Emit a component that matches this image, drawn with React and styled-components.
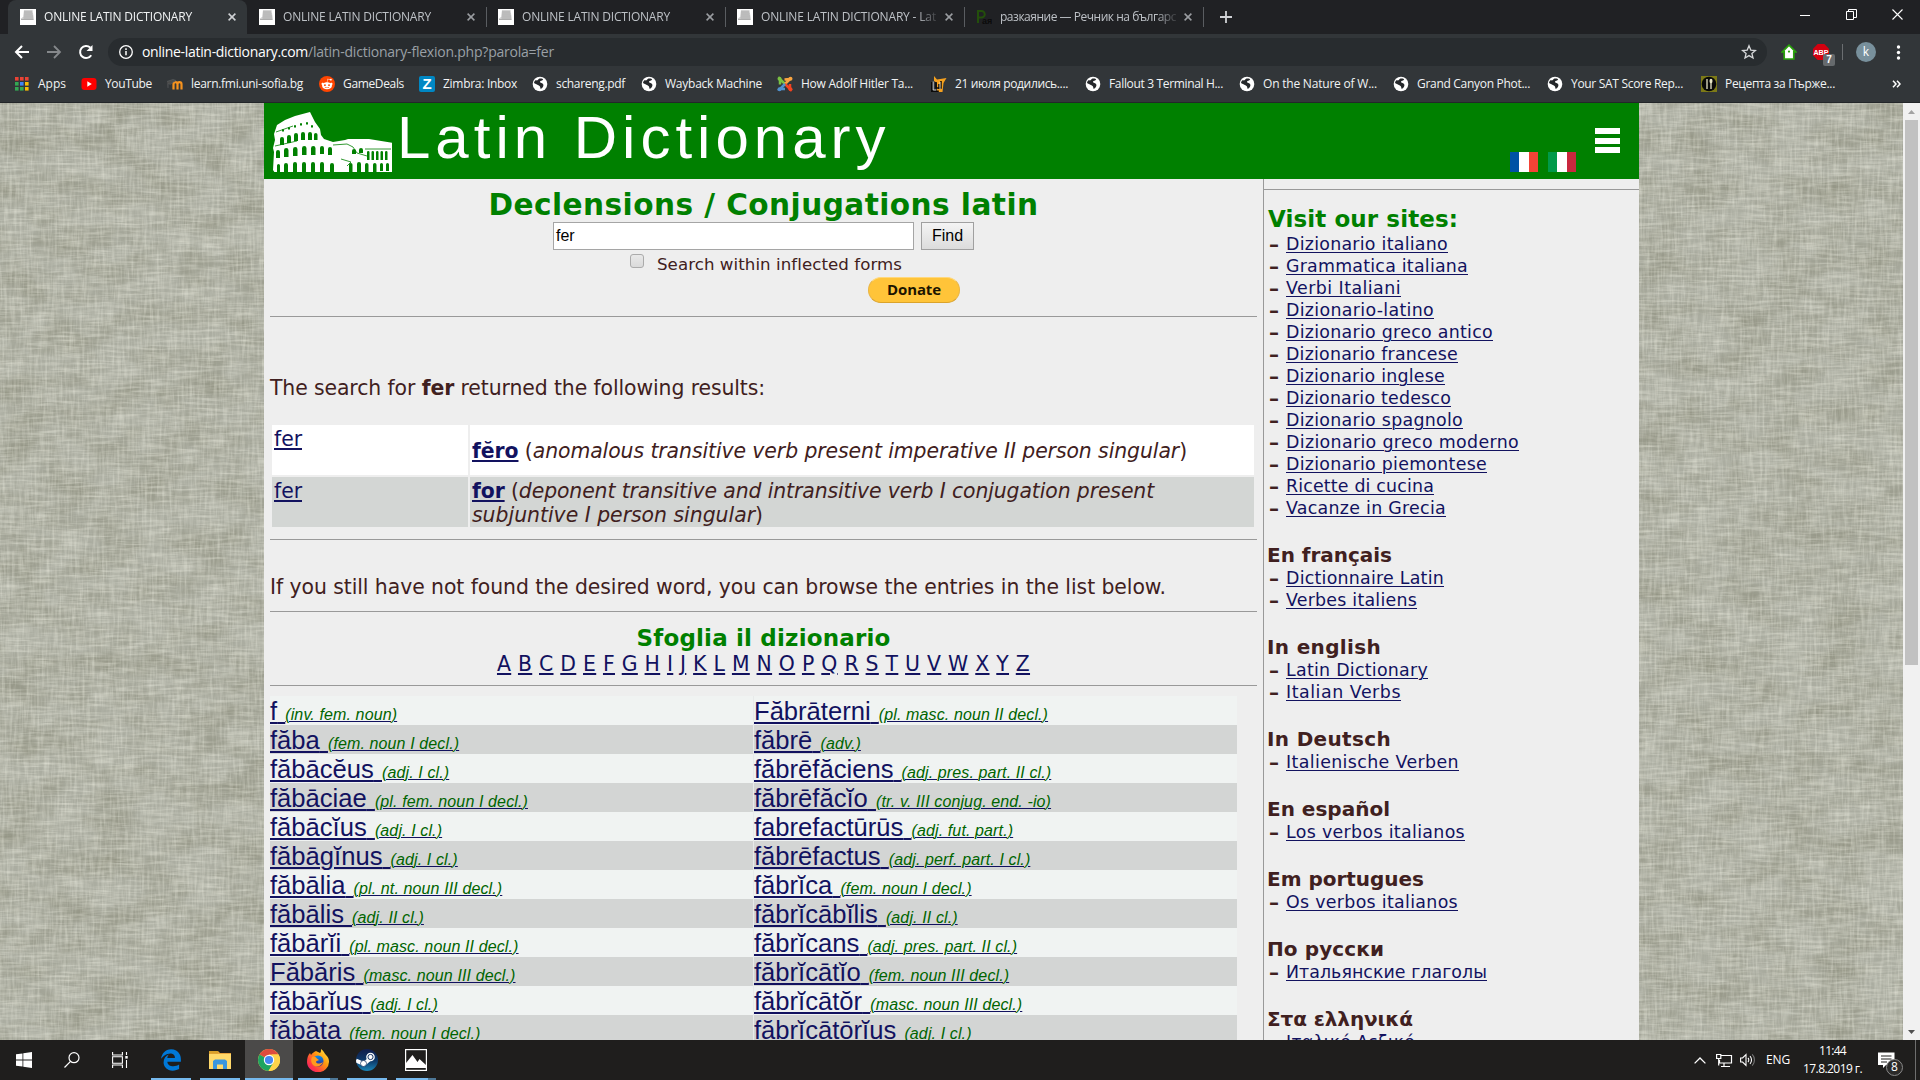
import React, { useLayoutEffect, useRef, useState } from "react";
import styled, { createGlobalStyle } from "styled-components";
import { FaRedditAlien, FaEdgeLegacy } from "react-icons/fa";

const UI = '"Open Sans", "Noto Sans", sans-serif';
const VERDANA = 'Verdana, "DejaVu Sans", sans-serif';
const ARIAL = 'Arial, "Liberation Sans", sans-serif';

const GlobalStyle = createGlobalStyle`
  *, *::before, *::after { box-sizing: border-box; }
  html, body { margin: 0; padding: 0; overflow: hidden; background: #202124; }
  svg { display: block; flex: none; }
`;

/* Text that spreads its letters so that it fills a given width. */
const FitSpan = styled.span`
  display: inline-block;
  white-space: pre;
`;
function Fit({ w, children }) {
  const ref = useRef(null);
  const [spacing, setSpacing] = useState(0);
  useLayoutEffect(() => {
    const el = ref.current;
    const chars = el.textContent.length;
    const natural = el.getBoundingClientRect().width - spacing * chars;
    setSpacing((w - natural) / chars);
  }, [w]);
  return (
    <FitSpan ref={ref} style={{ letterSpacing: `${spacing}px` }}>
      {children}
    </FitSpan>
  );
}

const Screen = styled.div`
  width: 1920px;
  height: 1080px;
  display: flex;
  flex-direction: column;
  overflow: hidden;
`;

/* ---------- tab strip ---------- */
const TabStrip = styled.div`
  height: 34px;
  flex: none;
  background: #202124;
  display: flex;
  padding-left: 8px;
  font: 12px/18px ${UI};
`;
const Tab = styled.div`
  width: 239px;
  height: 34px;
  display: flex;
  align-items: center;
  padding: 0 6px 0 12px;
  color: ${(p) => (p.$active ? "#f1f3f4" : "#bdc1c6")};
  background: ${(p) => (p.$active ? "#323639" : "transparent")};
  border-radius: 8px 8px 0 0;
`;
const TabTitle = styled.div`
  width: 176px;
  margin-left: 8px;
  padding-bottom: 1px;
  overflow: hidden;
  mask-image: linear-gradient(90deg, #000 156px, rgba(0, 0, 0, 0.15) 176px);
`;
const TabClose = styled.div`
  width: 18px;
  display: flex;
  justify-content: center;
  margin-left: 3px;
`;
const TabDivider = styled.div`
  width: 1px;
  height: 20px;
  margin: 7px -1px 0 0;
  background: #5a5d61;
`;
const NewTab = styled.div`
  width: 46px;
  display: flex;
  align-items: center;
  justify-content: center;
`;
const WindowButtons = styled.div`
  margin-left: auto;
  display: flex;
  height: 29px;
  align-items: center;
`;
const WindowButton = styled.div`
  width: 46px;
  display: flex;
  justify-content: center;
`;

const Parchment = () => (
  <svg width="16" height="16" viewBox="0 0 16 16">
    <rect width="16" height="16" fill="#fff" />
    <path d="M4 1h8.500l1.500 9.500H3l-2.500-.8L3 8z" fill="#d2d2d2" />
    <path d="M4 3h8M4 5h8.500M4 7h9M3.500 9H13M1 10.500h12.500" stroke="#9a9a9a" strokeWidth=".8" />
  </svg>
);
const Pay = () => (
  <svg width="16" height="16" viewBox="0 0 16 16">
    <path d="M2 14V2h3.500a3 3 0 0 1 0 6.500H2" fill="none" stroke="#234f0b" strokeWidth="2" />
    <text x="6" y="15" fontFamily="Liberation Sans" fontSize="9" fontWeight="700" fill="#0b0b0b">ая</text>
  </svg>
);
const Cross = ({ color }) => (
  <svg width="8" height="8" viewBox="0 0 8 8">
    <path d="M.6.6l6.8 6.8M7.4.6.6 7.4" stroke={color} strokeWidth="1.5" />
  </svg>
);

const tabs = [
  { title: "ONLINE LATIN DICTIONARY", w: 148, active: true },
  { title: "ONLINE LATIN DICTIONARY", w: 148 },
  { title: "ONLINE LATIN DICTIONARY", w: 148, divider: true },
  { title: "ONLINE LATIN DICTIONARY - Lat", w: 175, divider: true },
  { title: "разкаяние — Речник на българс", w: 176, divider: true, pay: true },
];

function Tabs() {
  return (
    <TabStrip>
      {tabs.map((t, i) => (
        <React.Fragment key={i}>
          {t.divider && <TabDivider />}
          <Tab $active={t.active}>
            {t.pay ? <Pay /> : <Parchment />}
            <TabTitle><Fit w={t.w}>{t.title}</Fit></TabTitle>
            <TabClose><Cross color={t.active ? "#d0d2d5" : "#9a9da1"} /></TabClose>
          </Tab>
        </React.Fragment>
      ))}
      <TabDivider />
      <NewTab>
        <svg width="12" height="12" viewBox="0 0 12 12"><path d="M6 0v12M0 6h12" stroke="#d0d2d5" strokeWidth="1.8" /></svg>
      </NewTab>
      <WindowButtons>
        <WindowButton><svg width="10" height="10"><path d="M0 5.5h10" stroke="#fff" /></svg></WindowButton>
        <WindowButton>
          <svg width="11" height="11" fill="none" stroke="#fff"><path d="M.5 2.5h7v8h-7zM2.5 2.5v-2h8v8h-2.5" /></svg>
        </WindowButton>
        <WindowButton>
          <svg width="11" height="11"><path d="M.5.5l10 10M10.5.5l-10 10" stroke="#fff" strokeWidth="1.1" /></svg>
        </WindowButton>
      </WindowButtons>
    </TabStrip>
  );
}

/* ---------- address bar ---------- */
const Toolbar = styled.div`
  height: 34px;
  flex: none;
  background: #323639;
  display: flex;
  align-items: center;
  padding: 2px 0 0 14px;
`;
const NavButton = styled.div`
  width: 16px;
  margin-right: 16px;
  display: flex;
  justify-content: center;
`;
const Omnibox = styled.div`
  width: 1659px;
  height: 28px;
  margin-left: -2px;
  border-radius: 14px;
  background: #282c2f;
  display: flex;
  align-items: center;
  padding: 0 10px;
  font: 14px/20px ${UI};
  color: #fff;
`;
const Url = styled.div`
  margin: 0 auto 0 8px;
`;
const Path = styled.span`
  color: #9aa0a6;
`;
const Extensions = styled.div`
  display: flex;
  align-items: center;
  margin-left: 14px;
`;
const AbpWrap = styled.div`
  position: relative;
  margin-left: 16px;
`;
const AbpCount = styled.div`
  position: absolute;
  left: 10px;
  top: 10px;
  width: 12px;
  height: 12px;
  border-radius: 2px;
  background: #666a6d;
  color: #fff;
  font: 700 10px/12px ${ARIAL};
  text-align: center;
`;
const ToolDivider = styled.div`
  width: 1px;
  height: 16px;
  margin: 0 13px 0 13px;
  background: #6b6e71;
`;
const Avatar = styled.div`
  width: 20px;
  height: 20px;
  border-radius: 50%;
  background: #78909c;
  color: #fff;
  font: 12px/19px ${UI};
  text-align: center;
`;

function AddressBar() {
  return (
    <Toolbar>
      <NavButton>
        <svg width="16" height="14" viewBox="0 0 16 14" fill="none" stroke="#fff" strokeWidth="2"><path d="M15 7H2M8 1 2 7l6 6" /></svg>
      </NavButton>
      <NavButton>
        <svg width="16" height="14" viewBox="0 0 16 14" fill="none" stroke="#85888b" strokeWidth="1.8"><path d="M1 7h13M8 1l6 6-6 6" /></svg>
      </NavButton>
      <NavButton>
        <svg width="16" height="16" viewBox="0 0 16 16"><path d="M13.2 11.2A6 6 0 1 1 12.2 3.6" fill="none" stroke="#fff" strokeWidth="2" /><path d="M14.5 1v6h-6z" fill="#fff" /></svg>
      </NavButton>
      <Omnibox>
        <svg width="16" height="16" viewBox="0 0 16 16"><circle cx="8" cy="8" r="6.3" fill="none" stroke="#fff" strokeWidth="1.3" /><path d="M8 7v4.3M8 4.3v1.6" stroke="#fff" strokeWidth="1.5" /></svg>
        <Url><Fit w={166}>online-latin-dictionary.com</Fit><Path><Fit w={246}>/latin-dictionary-flexion.php?parola=fer</Fit></Path></Url>
        <svg width="16" height="16" viewBox="0 0 16 16"><path d="M8 1.8l1.8 4.3 4.6.4-3.5 3 1.1 4.5-4-2.4-4 2.4 1.1-4.5-3.5-3 4.6-.4z" fill="none" stroke="#d5d7d9" strokeWidth="1.3" /></svg>
      </Omnibox>
      <Extensions>
        <svg width="16" height="16" viewBox="0 0 16 16"><path d="M8 1.200 14.600 7.800H12.800V15H3.200V7.800H1.400z" fill="#fff" stroke="#29a20b" strokeWidth="1.700" /><circle cx="8" cy="7.600" r="1.100" fill="#29a20b" /></svg>
        <AbpWrap>
          <svg width="16" height="16" viewBox="0 0 16 16"><path d="M4.7 0h6.6L16 4.7v6.6L11.3 16H4.7L0 11.3V4.7z" fill="#d3000f" /><text x="8" y="10.600" textAnchor="middle" fontFamily="Liberation Sans" fontSize="7.200" fontWeight="700" fill="#fff">ABP</text></svg>
          <AbpCount>7</AbpCount>
        </AbpWrap>
        <ToolDivider />
        <Avatar>k</Avatar>
        <svg width="44" height="16" viewBox="0 0 44 16" fill="#fff"><circle cx="22.500" cy="3" r="1.700" /><circle cx="22.500" cy="8.500" r="1.700" /><circle cx="22.500" cy="14" r="1.700" /></svg>
      </Extensions>
    </Toolbar>
  );
}

/* ---------- bookmarks ---------- */
const BookmarkBar = styled.div`
  height: 35px;
  flex: none;
  background: #323639;
  border-bottom: 1px solid #232629;
  display: flex;
  align-items: center;
  padding: 0 0 2px 14px;
  font: 12px/18px ${UI};
  color: #f1f3f4;
`;
const Bookmark = styled.div`
  width: ${(p) => p.$pitch}px;
  flex: none;
  display: flex;
  align-items: center;
  gap: 8px;
  white-space: nowrap;
`;
const Disc = styled.span`
  width: 16px;
  height: 16px;
  flex: none;
  border-radius: ${(p) => p.$radius};
  background: ${(p) => p.$bg};
  color: #fff;
  display: flex;
  align-items: center;
  justify-content: center;
  font: 700 15px/16px ${ARIAL};
`;

const Globe = () => (
  <svg width="16" height="16" viewBox="0 0 16 16">
    <circle cx="8" cy="8" r="7.300" fill="#fff" />
    <path d="M7.500 2.600c1.500-.4 3.300 0 3.600.8-.3 1-1.600.9-2.600 1.600-.8.600-.6 1.400.4 1.800 1.600.5 2.700 1.200 2.500 2.700-.2 1.300-1.200 2.700-2.600 3.400-.7-.5-.3-1.700-1-2.600C6.800 9.200 5 8.800 4 8c-.9-.6-1.900-.8-2-1.600C2.300 5.500 3 4.600 3.900 4c.8.700 1.500.3 2.200-.2.500-.4.700-1 1.400-1.200z" fill="#25282b" />
  </svg>
);
const appColors = ["#ea4335", "#ea4335", "#ea4335", "#34a853", "#4285f4", "#fbbc04", "#34a853", "#34a853", "#fbbc04"];
const AppsIcon = () => (
  <svg width="16" height="16" viewBox="0 0 16 16">
    {appColors.map((c, i) => <rect key={i} x={1 + (i % 3) * 5} y={1 + Math.floor(i / 3) * 5} width="3.600" height="3.600" fill={c} />)}
  </svg>
);
const YouTube = () => (
  <svg width="16" height="16" viewBox="0 0 16 16"><rect x=".5" y="2" width="15" height="12" rx="3" fill="#f00" /><path d="M6.300 5.300 10.800 8l-4.500 2.700z" fill="#fff" /></svg>
);
const Moodle = () => (
  <svg width="16" height="16" viewBox="0 0 16 16"><path d="M6.500 13.500V8.200a2 2 0 0 1 4 0v5.300M10.500 8.200a2 2 0 0 1 4 0v5.300" fill="none" stroke="#f7931e" strokeWidth="2.200" /><path d="M0 5.500 6 3.500l3 1-4 2.200-1.500 1.600L1 7.500V12" fill="#4a4a4a" stroke="#56595b" strokeWidth=".8" /></svg>
);
const Joomla = () => (
  <svg width="16" height="16" viewBox="0 0 16 16" fill="none" strokeWidth="2.500">
    <path d="M3 8.500V3l5 5" stroke="#7ac143" />
    <path d="M7.500 3.500 13 3 8 8" stroke="#f9a541" strokeLinejoin="round" />
    <path d="M13 8v5L8 8" stroke="#f44321" />
    <path d="M8 13H3l5-5" stroke="#5091cd" />
    <g stroke="none"><circle cx="2.500" cy="2.700" r="2" fill="#7ac143" /><circle cx="13.500" cy="2.700" r="2" fill="#f9a541" /><circle cx="13.500" cy="13.300" r="2" fill="#f44321" /><circle cx="2.500" cy="13.300" r="2" fill="#5091cd" /></g>
  </svg>
);
const Lira = () => (
  <svg width="16" height="16" viewBox="0 0 16 16"><path d="M3 0l3 3.500L15.500 2l-3 5-1 9H6V7L3 5z" fill="#f5a11f" /><path d="M.8 6v9.200h7M5 6v6h5V5M8 8v5" fill="none" stroke="#0a0a0a" strokeWidth="1.500" /><path d="M2.200 5.500v8.500h3M9 6v7" fill="none" stroke="#eee" strokeWidth=".8" /></svg>
);
const Recipe = () => (
  <svg width="16" height="16" viewBox="0 0 16 16"><rect width="16" height="16" fill="#7d7a17" /><circle cx="8" cy="8" r="7.300" fill="#080808" /><path d="M6 3v3.500M6 6v7M10 13V8M10 3v5" stroke="#e8e6c8" strokeWidth="1.300" /><ellipse cx="10" cy="5" rx="1.500" ry="2.300" fill="#e8e6c8" /></svg>
);

const bookmarks = [
  [<AppsIcon />, "Apps", 28, 67],
  [<YouTube />, "YouTube", 47, 86],
  [<Moodle />, "learn.fmi.uni-sofia.bg", 112, 152],
  [<Disc $radius="50%" $bg="#ff4500"><FaRedditAlien size={12} /></Disc>, "GameDeals", 61, 100],
  [<Disc $radius="2px" $bg="#0087c3">Z</Disc>, "Zimbra: Inbox", 74, 113],
  [<Globe />, "schareng.pdf", 69, 109],
  [<Globe />, "Wayback Machine", 97, 136],
  [<Joomla />, "How Adolf Hitler Ta...", 112, 154],
  [<Lira />, "21 июля родились....", 113, 154],
  [<Globe />, "Fallout 3 Terminal H...", 114, 154],
  [<Globe />, "On the Nature of W...", 114, 154],
  [<Globe />, "Grand Canyon Phot...", 113, 154],
  [<Globe />, "Your SAT Score Rep...", 112, 154],
  [<Recipe />, "Рецепта за Пърже...", 110, 191],
];

function Bookmarks() {
  return (
    <BookmarkBar>
      {bookmarks.map(([icon, label, w, pitch], i) => (
        <Bookmark key={i} $pitch={pitch}>{icon}<Fit w={w}>{label}</Fit></Bookmark>
      ))}
      <svg width="9" height="8" viewBox="0 0 9 8" fill="none" stroke="#fff" strokeWidth="1.500"><path d="M1 .8 4 4 1 7.200M5 .8 8 4 5 7.200" /></svg>
    </BookmarkBar>
  );
}

/* ---------- web page ---------- */
const Viewport = styled.div`
  height: 937px;
  flex: none;
  display: flex;
  position: relative;
  overflow: hidden;
  background: #afb0a4;
`;
const Linen = styled.svg`
  position: absolute;
  left: 0;
  top: 0;
`;
const Backdrop = styled.div`
  width: 1903px;
  display: flex;
  padding-left: 264px;
  position: relative;
`;
const Site = styled.div`
  width: 1375px;
  height: 937px;
  overflow: hidden;
  background: #eee;
  color: #402020;
  font: 20.4px/24px ${VERDANA};
`;
const Banner = styled.div`
  height: 76px;
  background: #008000;
  display: flex;
  padding-left: 9px;
`;
const BannerTitle = styled.div`
  margin: 0 auto 0 5px;
  font: 60px/70px ${ARIAL};
  letter-spacing: 5px;
  white-space: nowrap;
  color: #fff;
`;
const Flags = styled.div`
  display: flex;
  gap: 10px;
  padding-top: 49px;
`;
const Flag = styled.div`
  width: 28px;
  height: 20px;
  background: linear-gradient(90deg, ${(p) => p.$left} 9px, #fff 9px, #fff 19px, ${(p) => p.$right} 19px);
`;
const Burger = styled.div`
  margin: 25px 19px 0;
  width: 25px;
  height: 25px;
  display: flex;
  flex-direction: column;
  justify-content: space-between;
`;
const BurgerLine = styled.div`
  height: 6px;
  background: #fff;
`;
const Columns = styled.div`
  display: flex;
  height: 861px;
`;
const Main = styled.div`
  width: 999px;
  flex: none;
  padding: 9px 6px 0;
`;
const Heading = styled.div`
  font-weight: 700;
  color: #008000;
  text-align: center;
  font-size: ${(p) => p.$size}px;
  line-height: ${(p) => p.$line}px;
  height: ${(p) => p.$line}px;
  margin-top: ${(p) => p.$top || 0}px;
`;
const SearchRow = styled.div`
  display: flex;
  gap: 7px;
  padding-left: 283px;
  font: 16px/26px ${ARIAL};
  color: #000;
`;
const Field = styled.div`
  width: 361px;
  height: 28px;
  padding-left: 2px;
  line-height: 25px;
  background: #fff;
  border: 1px solid #a5a5a5;
`;
const FindButton = styled.div`
  width: 53px;
  height: 28px;
  line-height: 25px;
  text-align: center;
  border: 1px solid #a0a0a0;
  background: linear-gradient(#f4f4f4, #dcdcdc);
`;
const CheckRow = styled.div`
  display: flex;
  padding: 1px 0 0 360px;
  height: 27px;
  font-size: 16.64px;
  line-height: 27px;
`;
const Checkbox = styled.div`
  width: 14px;
  height: 14px;
  margin: 3px 13px 0 0;
  border: 1px solid #ababab;
  border-radius: 3px;
  background: linear-gradient(#e9e9e9, #dadada);
`;
const Donate = styled.div`
  width: 92px;
  height: 26px;
  margin-left: 598px;
  border-radius: 13px;
  background: #ffc439;
  border: 1px solid #e9b544;
  border-top-color: #ffd87c;
  border-bottom-color: #dba32a;
  color: #1b1400;
  text-align: center;
  font: 700 15px/23px ${UI};
`;
const Rule = styled.div`
  height: 1px;
  background: #999;
  margin-top: ${(p) => p.$top}px;
`;
const Line = styled.div`
  height: 24px;
  margin-top: ${(p) => p.$top}px;
`;
const Link = styled.span`
  color: #12125f;
  font-weight: ${(p) => (p.$bold ? 700 : 400)};
  text-decoration: underline;
  text-decoration-thickness: ${(p) => p.$thick || 2}px;
  text-underline-offset: 1.5px;
`;
const Results = styled.div`
  display: grid;
  grid-template-columns: 196px 784px;
  grid-auto-rows: 50px;
  gap: 2px;
  margin: 25px 0 0 2px;
`;
const Cell = styled.div`
  background: ${(p) => (p.$grey ? "#d3d6d4" : "#fff")};
  padding: 2px 0 0 2px;
  display: flex;
  flex-direction: column;
  align-items: flex-start;
  justify-content: center;
`;
const TopCell = styled(Cell)`
  justify-content: flex-start;
`;
const Alphabet = styled.div`
  height: 26px;
  line-height: 26px;
  text-align: center;
`;
const Entries = styled.div`
  display: grid;
  grid-template-columns: 483px 484px;
  grid-auto-rows: 29px;
  margin-top: 10px;
  font: 25.6px/29px ${ARIAL};
`;
const Entry = styled.div`
  background: ${(p) => (p.$grey ? "#d3d5d4" : "#f0f3f2")};
  border-left: ${(p) => (p.$second ? "1px solid #e8eaea" : "0")};
  white-space: pre;
  line-height: 30px;
  height: 29px;
`;
const Word = styled.span`
  color: #12125f;
  word-spacing: 1px;
  text-decoration: underline 2px;
  text-underline-offset: 2px;
`;
const Gram = styled.span`
  color: #006400;
  font-size: 16px;
  font-style: italic;
  letter-spacing: 0.12px;
  text-decoration: underline 1px #12125f;
  text-underline-offset: 1px;
`;

const Side = styled.div`
  width: 376px;
  border-left: 1px solid #999;
  padding-top: 10px;
`;
const SideTitle = styled(Heading)`
  text-align: left;
  padding-left: 4px;
`;
const SideHead = styled.div`
  font-size: 20px;
  font-weight: 700;
  height: 24px;
  margin-top: 24px;
  padding-left: 3px;
`;
const SideItem = styled.div`
  display: flex;
  height: 22px;
  font-size: 17.4px;
  line-height: 22px;
  padding-left: 5px;
`;
const Dash = styled.b`
  width: 17px;
  font-size: 20px;
`;

const Scrollbar = styled.div`
  width: 17px;
  flex: none;
  background: #f1f1f1;
  position: relative;
  display: flex;
  flex-direction: column;
  align-items: center;
  padding: 7px 0 6px;
`;
const Thumb = styled.div`
  width: 13px;
  height: 545px;
  margin: 6px 0 auto;
  background: #c1c1c1;
`;

const LinenTexture = () => (
  <Linen width="1903" height="937" colorInterpolationFilters="sRGB">
    <defs>
      <filter id="warp" x="0" y="0" width="100%" height="100%">
        <feTurbulence type="fractalNoise" baseFrequency="0.400 0.040" numOctaves="3" seed="4" />
        <feColorMatrix values="0 0 0 0 1  0 0 0 0 1  0 0 0 0 0.950  0.550 0 0 0 -0.200" />
      </filter>
      <filter id="weft" x="0" y="0" width="100%" height="100%">
        <feTurbulence type="fractalNoise" baseFrequency="0.035 0.400" numOctaves="3" seed="9" />
        <feColorMatrix values="0 0 0 0 1  0 0 0 0 1  0 0 0 0 0.950  0.700 0 0 0 -0.270" />
      </filter>
      <filter id="shade" x="0" y="0" width="100%" height="100%">
        <feTurbulence type="fractalNoise" baseFrequency="0.022 0.040" numOctaves="4" seed="2" />
        <feColorMatrix values="0 0 0 0 0.420  0 0 0 0 0.420  0 0 0 0 0.330  0.650 0 0 0 -0.220" />
      </filter>
    </defs>
    <rect width="1903" height="937" fill="#abada1" />
    <rect width="1903" height="937" filter="url(#shade)" />
    <rect width="1903" height="937" filter="url(#warp)" />
    <rect width="1903" height="937" filter="url(#weft)" />
  </Linen>
);

const arch = (x, y, w, h) => `M${x} ${y + h}v${-(h - w / 2)}a${w / 2} ${w / 2} 0 0 1 ${w} 0v${h - w / 2}z`;
const Colosseum = styled.svg`
  margin-top: 9px;
`;
const Logo = () => (
  <Colosseum width="119" height="60" viewBox="0 0 119 60">
    <path d="M0 58 1 40 0 36 2 28 1 22 4 13 12 8 22 4 37 0l5 10 5 7 1 6 3 4 9 3 12-2 3-1 21 0 24 4 1 8-1 8 1 12-2 2H2z" fill="#fff" />
    <path
      fill="#008000"
      d={[
        [7, 25, 4, 8], [14, 23, 4, 8], [21, 21, 4, 8], [28, 20, 4, 8], [35, 20, 4, 8], [41, 21, 3.5, 7],
        [3, 38, 4, 8], [11, 36, 4.5, 9], [20, 35, 4.5, 9], [29, 34, 4.5, 9], [38, 34, 4.5, 9], [47, 34, 4, 8], [55, 35, 4, 8],
        [4, 52, 3, 8], [11, 51, 4, 9], [20, 50, 4, 10], [29, 50, 4, 10], [38, 50, 4, 10], [47, 50, 4, 10], [57, 51, 4, 9],
        [76, 51, 3.5, 9], [84, 50, 4, 10], [92, 51, 3.5, 9], [100, 51, 3.5, 9], [107, 51, 3, 8], [113, 51, 3, 8],
        [94, 39, 2.5, 9], [98.5, 39, 2.5, 9], [103, 39, 2.5, 9], [107.5, 39, 2.5, 9], [112, 39, 2.5, 9],
        [79, 37, 4, 5], [86, 36, 4, 5],
        [9, 17, 2, 2.5], [15, 15, 2, 2.5], [21, 13, 2, 2.5], [27, 11, 2, 2.5], [33, 10, 2, 2.5], [38, 13, 2, 2.5],
      ].map((a) => arch(...a)).join("")}
    />
    <path d="M3 20 20 14M2 34l22-5M60 33l14-1 6 3 4 6 10 3M68 47l10 3-4 4M92 37l26 0" fill="none" stroke="#008000" strokeWidth=".8" />
  </Colosseum>
);

const leftEntries = [
  ["f", "(inv. fem. noun)"], ["făba", "(fem. noun I decl.)"], ["făbācĕus", "(adj. I cl.)"], ["făbāciae", "(pl. fem. noun I decl.)"],
  ["făbācĭus", "(adj. I cl.)"], ["făbāgĭnus", "(adj. I cl.)"], ["făbālia", "(pl. nt. noun III decl.)"], ["făbālis", "(adj. II cl.)"],
  ["făbārĭi", "(pl. masc. noun II decl.)"], ["Făbăris", "(masc. noun III decl.)"], ["făbārĭus", "(adj. I cl.)"], ["făbāta", "(fem. noun I decl.)"],
];
const rightEntries = [
  ["Făbrāterni", "(pl. masc. noun II decl.)"], ["făbrē", "(adv.)"], ["făbrēfăciens", "(adj. pres. part. II cl.)"], ["făbrēfăcĭo", "(tr. v. III conjug. end. -io)"],
  ["fabrefactūrūs", "(adj. fut. part.)"], ["făbrēfactus", "(adj. perf. part. I cl.)"], ["făbrĭca", "(fem. noun I decl.)"], ["făbrĭcābĭlis", "(adj. II cl.)"],
  ["făbrĭcans", "(adj. pres. part. II cl.)"], ["făbrĭcātĭo", "(fem. noun III decl.)"], ["făbrĭcātŏr", "(masc. noun III decl.)"], ["făbrĭcātōrĭus", "(adj. I cl.)"],
];

const sites = [
  ["Dizionario italiano", 162], ["Grammatica italiana", 182], ["Verbi Italiani", 115], ["Dizionario-latino", 148],
  ["Dizionario greco antico", 207], ["Dizionario francese", 172], ["Dizionario inglese", 159], ["Dizionario tedesco", 165],
  ["Dizionario spagnolo", 177], ["Dizionario greco moderno", 233], ["Dizionario piemontese", 201], ["Ricette di cucina", 148],
  ["Vacanze in Grecia", 160],
];
const groups = [
  ["En français", 125, [["Dictionnaire Latin", 158], ["Verbes italiens", 131]]],
  ["In english", 114, [["Latin Dictionary", 142], ["Italian Verbs", 115]]],
  ["In Deutsch", 124, [["Italienische Verben", 173]]],
  ["En español", 123, [["Los verbos italianos", 179]]],
  ["Em portugues", 157, [["Os verbos italianos", 172]]],
  ["По русски", 117, [["Итальянские глаголы", 201]]],
  ["Στα ελληνικά", 146, [["Ιταλικό Λεξικό", 129]]],
];

const FitLink = ({ w, thick, children }) => <Fit w={w}><Link $thick={thick}>{children}</Link></Fit>;
const Item = ({ label, w }) => (
  <SideItem><Dash>–</Dash><FitLink w={w} thick={1}>{label}</FitLink></SideItem>
);

function WebPage() {
  return (
    <Viewport>
      <LinenTexture />
      <Backdrop>
        <Site>
          <Banner>
            <Logo />
            <BannerTitle>Latin Dictionary</BannerTitle>
            <Flags>
              <Flag $left="#0052a5" $right="#f44336" />
              <Flag $left="#009a49" $right="#c9283e" />
            </Flags>
            <Burger><BurgerLine /><BurgerLine /><BurgerLine /></Burger>
          </Banner>
          <Columns>
            <Main>
              <Heading $size={29.6} $line={34}><Fit w={550}>Declensions / Conjugations latin</Fit></Heading>
              <SearchRow><Field>fer</Field><FindButton>Find</FindButton></SearchRow>
              <CheckRow><Checkbox /><Fit w={245}>Search within inflected forms</Fit></CheckRow>
              <Donate><Fit w={54}>Donate</Fit></Donate>
              <Rule $top={13} />
              <Line $top={59}><Fit w={495}>The search for <b>fer</b> returned the following results:</Fit></Line>
              <Results>
                <TopCell><FitLink w={28}>fer</FitLink></TopCell>
                <Cell><Fit w={715}><Link $bold>fĕro</Link> (<i>anomalous transitive verb present imperative II person singular</i>)</Fit></Cell>
                <TopCell $grey><FitLink w={28}>fer</FitLink></TopCell>
                <Cell $grey>
                  <Fit w={682}><Link $bold>for</Link> (<i>deponent transitive and intransitive verb I conjugation present</i></Fit>
                  <Fit w={291}><i>subjuntive I person singular</i>)</Fit>
                </Cell>
              </Results>
              <Rule $top={12} />
              <Line $top={35}><Fit w={896}>If you still have not found the desired word, you can browse the entries in the list below.</Fit></Line>
              <Rule $top={12} />
              <Heading $size={23} $line={26} $top={13}><Fit w={254}>Sfoglia il dizionario</Fit></Heading>
              <Alphabet>
                <Fit w={533}>
                  {"ABCDEFGHIJKLMNOPQRSTUVWXYZ".split("").map((c, i) => (
                    <React.Fragment key={c}>{i > 0 && " "}<Link>{c}</Link></React.Fragment>
                  ))}
                </Fit>
              </Alphabet>
              <Rule $top={8} />
              <Entries>
                {leftEntries.map((l, i) => (
                  <React.Fragment key={i}>
                    {[l, rightEntries[i]].map(([word, gram], j) => (
                      <Entry key={j} $grey={i % 2 === 1} $second={j === 1}><Word>{word} </Word><Gram>{gram}</Gram></Entry>
                    ))}
                  </React.Fragment>
                ))}
              </Entries>
            </Main>
            <Side>
              <Rule $top={0} />
              <SideTitle $size={23} $line={28} $top={15}><Fit w={190}>Visit our sites:</Fit></SideTitle>
              {sites.map(([label, w]) => <Item key={label} label={label} w={w} />)}
              {groups.map(([title, w, items]) => (
                <React.Fragment key={title}>
                  <SideHead><Fit w={w}>{title}</Fit></SideHead>
                  {items.map(([label, iw]) => <Item key={label} label={label} w={iw} />)}
                </React.Fragment>
              ))}
            </Side>
          </Columns>
        </Site>
      </Backdrop>
      <Scrollbar>
        <svg width="7" height="4"><path d="M0 4 3.500 0 7 4z" fill="#a3a3a3" /></svg>
        <Thumb />
        <svg width="7" height="4"><path d="M0 0 3.500 4 7 0z" fill="#505050" /></svg>
      </Scrollbar>
    </Viewport>
  );
}

/* ---------- taskbar ---------- */
const Taskbar = styled.div`
  height: 40px;
  flex: none;
  background: #1f1e1d;
  display: flex;
  color: #fff;
  font: 12px/18px ${UI};
`;
const Task = styled.div`
  width: ${(p) => p.$w}px;
  height: 40px;
  margin-left: ${(p) => (p.$current ? 3 : 0)}px;
  display: flex;
  flex-direction: column;
  align-items: center;
  justify-content: space-between;
  background: ${(p) => (p.$current ? "#4b4a49" : "transparent")};
`;
const TaskIcon = styled.div`
  height: 38px;
  display: flex;
  align-items: center;
  padding-top: 2px;
`;
const RunBar = styled.div`
  width: ${(p) => p.$w}px;
  height: 2px;
  background: ${(p) => (p.$stack ? "linear-gradient(90deg, #76b9ed 32px, #4d7796 32px)" : "#76b9ed")};
`;
const Tray = styled.div`
  margin-left: auto;
  display: flex;
  align-items: center;
`;
const Lang = styled.div`
  margin: 0 0 0 10px;
`;
const Clock = styled.div`
  width: 87px;
  padding-right: 2px;
  text-align: center;
  line-height: 18px;
`;
const Notice = styled.div`
  position: relative;
  width: 37px;
  margin-left: 1px;
`;
const NoticeCount = styled.div`
  position: absolute;
  left: 8px;
  top: 7px;
  width: 17px;
  height: 17px;
  border-radius: 50%;
  border: 1px solid #8a8a8a;
  background: #2b2a29;
  text-align: center;
  font: 12px/14px ${UI};
`;
const Peek = styled.div`
  width: 5px;
  height: 40px;
  border-left: 1px solid #6e6e6e;
`;

const Windows = () => (
  <svg width="16" height="16" viewBox="0 0 16 16" fill="#fff"><path d="M0 2.300 6.500 1.400v6.200H0zM7.300 1.300 16 0v7.600H7.300zM0 8.400h6.500v6.200L0 13.700zM7.300 8.400H16V16l-8.700-1.300z" /></svg>
);
const Search = () => (
  <svg width="16" height="16" viewBox="0 0 16 16" fill="none" stroke="#fff" strokeWidth="1.200"><circle cx="10" cy="5.700" r="5" /><path d="M6.500 9.300.5 15.500" /></svg>
);
const TaskView = () => (
  <svg width="16" height="16" viewBox="0 0 16 16" fill="none" stroke="#fff" strokeWidth="1.100"><path d="M.6 0v3h9.800V0M.6 16v-3h9.800v3M.6 4.800h9.800v6.400H.6zM14.500 0v3M14.500 8v8" /><rect x="13.300" y="4" width="2.400" height="2.600" fill="#fff" stroke="none" /></svg>
);
const Explorer = () => (
  <svg width="22" height="18" viewBox="0 0 22 18"><path d="M0 0h9l2 2h11v14H0z" fill="#e8a33c" /><path d="M0 3h22v15H0z" fill="#ffd96b" /><path d="M0 0h9v2.500H0z" fill="#d9a02a" /><path d="M4 18v-8l2-1.500h10l2 1.500v8h-4v-4.500H8V18z" fill="#3a96dd" /></svg>
);
const Chrome = () => (
  <svg width="22" height="22" viewBox="0 0 22 22">
    <circle cx="11" cy="11" r="11" fill="#fdd34a" />
    <path d="M11 11 1.500 5.500A11 11 0 0 1 20.500 5.500H11z" fill="#dd4b3e" />
    <path d="M1.500 5.500A11 11 0 0 0 10.500 22l5-8.500-4.500-2.500z" fill="#1da462" />
    <path d="M20.500 5.500A11 11 0 0 1 10.500 22l5.300-8.500L14 5.500z" fill="#fdd34a" />
    <circle cx="11" cy="11" r="5.200" fill="#fff" /><circle cx="11" cy="11" r="4.100" fill="#4587f3" />
  </svg>
);
const Firefox = () => (
  <svg width="22" height="23" viewBox="0 0 22 23">
    <defs>
      <linearGradient id="fox" x1="1" y1="0" x2="0" y2="1"><stop offset="0" stopColor="#fff44f" /><stop offset=".4" stopColor="#ff980e" /><stop offset=".75" stopColor="#ff3647" /><stop offset="1" stopColor="#e31587" /></linearGradient>
      <linearGradient id="foxglobe" x1="0" y1="0" x2="0" y2="1"><stop offset="0" stopColor="#0090ed" /><stop offset="1" stopColor="#3b1d8f" /></linearGradient>
    </defs>
    <path d="M14 0c3 2 3 4 5 6 2 2 3 4 3 6.500A11 10.500 0 0 1 0 13C0 9 1 6 3 4l1 2c1-2 3-3 5-4 1 1 3 1 4 2 1-1 1-2 1-4z" fill="url(#fox)" />
    <circle cx="11" cy="12" r="5.500" fill="url(#foxglobe)" />
    <path d="M5 8c2-1 4 0 5 1.500L12 11c-1 1-3 .5-3 2 1 2 4 2 7 0-1 3-4 5-7 4.500C5 17 3 12 5 8z" fill="#ff9a1f" />
  </svg>
);
const SteamDisc = styled.div`
  width: 22px;
  height: 22px;
  border-radius: 50%;
  background: linear-gradient(#111d4a, #0d3b6b 55%, #1a86b8);
  overflow: hidden;
`;
const Steam = () => (
  <SteamDisc>
    <svg width="22" height="22" viewBox="0 0 22 22"><path d="M0 11.500 8 15l7-6" stroke="#fff" strokeWidth="4" fill="none" /><circle cx="14.500" cy="8" r="4.300" fill="#fff" /><circle cx="14.500" cy="8" r="2.600" fill="#fff" stroke="#13305f" strokeWidth="1" /><circle cx="7.500" cy="14.500" r="3" fill="#fff" stroke="#13305f" strokeWidth=".7" /></svg>
  </SteamDisc>
);
const Photos = () => (
  <svg width="22" height="22" viewBox="0 0 22 22"><rect x=".6" y=".6" width="20.800" height="20.800" fill="#1f1e1d" stroke="#fff" strokeWidth="1.200" /><path d="M1 19v-5l6.500-8 5 7 2-3 6.500 6v3z" fill="#fff" /></svg>
);

function WindowsBar() {
  return (
    <Taskbar>
      <Task $w={48}><TaskIcon><Windows /></TaskIcon></Task>
      <Task $w={48}><TaskIcon><Search /></TaskIcon></Task>
      <Task $w={48}><TaskIcon><TaskView /></TaskIcon></Task>
      <Task $w={54}><TaskIcon><FaEdgeLegacy size={22} color="#0078d7" /></TaskIcon><RunBar $w={40} /></Task>
      <Task $w={44}><TaskIcon><Explorer /></TaskIcon><RunBar $w={40} /></Task>
      <Task $w={48} $current><TaskIcon><Chrome /></TaskIcon><RunBar $w={48} /></Task>
      <Task $w={50}><TaskIcon><Firefox /></TaskIcon><RunBar $w={40} $stack /></Task>
      <Task $w={48}><TaskIcon><Steam /></TaskIcon><RunBar $w={40} /></Task>
      <Task $w={50}><TaskIcon><Photos /></TaskIcon><RunBar $w={40} $stack /></Task>
      <Tray>
        <svg width="12" height="7" viewBox="0 0 12 7"><path d="M.6 6.400 6 1l5.400 5.400" fill="none" stroke="#fff" strokeWidth="1.300" /></svg>
        <svg width="34" height="16" viewBox="0 0 34 16" fill="none" stroke="#fff" strokeWidth="1.200"><path d="M15 3.500h10.500V11H13.500V8M10.600 2.500h4.200v4h-4.200zM12.700 6.500v7M18 11v3M15 14.500h9" /></svg>
        <svg width="16" height="14" viewBox="0 0 16 14" fill="none" stroke="#fff" strokeWidth="1.100"><path d="M.6 5h2L6 1.500v11L2.600 9h-2zM8 5c1 1 1 3 0 4M10 3.200c2 2 2 5.600 0 7.600" /><path d="M12.200 1.400c3 3 3 8.200 0 11.200" stroke="#777" /></svg>
        <Lang><Fit w={24}>ENG</Fit></Lang>
        <Clock><Fit w={27}>11:44</Fit><br /><Fit w={59}>17.8.2019 г.</Fit></Clock>
        <Notice>
          <svg width="17" height="17" viewBox="0 0 17 17"><path d="M0 .5h16.500v12.500H8L5 16v-3H0z" fill="#fff" /><path d="M3 4h10.500M3 7h10.500M3 10h6" stroke="#1f1e1d" strokeWidth="1.200" /></svg>
          <NoticeCount>8</NoticeCount>
        </Notice>
        <Peek />
      </Tray>
    </Taskbar>
  );
}

export default function App() {
  return (
    <Screen>
      <GlobalStyle />
      <Tabs />
      <AddressBar />
      <Bookmarks />
      <WebPage />
      <WindowsBar />
    </Screen>
  );
}
